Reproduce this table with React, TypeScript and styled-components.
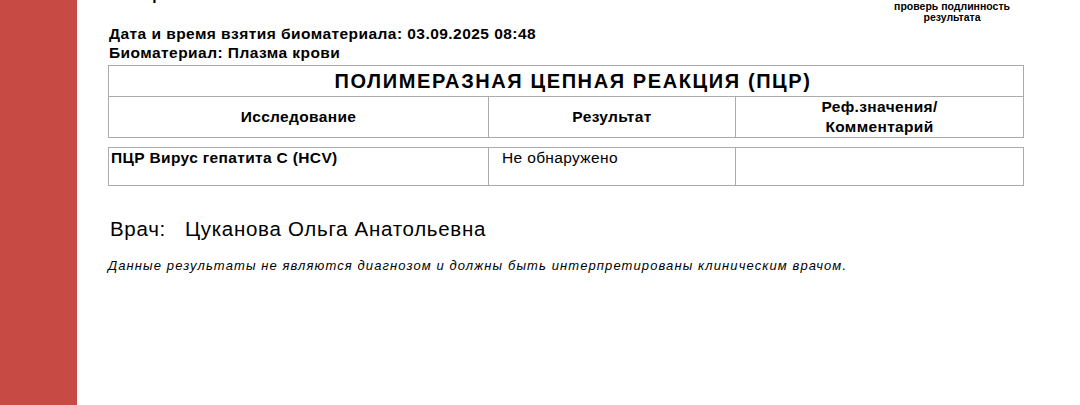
import styled, { createGlobalStyle } from 'styled-components';

const GlobalStyle = createGlobalStyle`
  html, body { margin: 0; padding: 0; background: #fff; }
  body { font-family: 'Liberation Sans', Arial, sans-serif; color: #000; }
`;

const Page = styled.div`
  display: flex;
  width: 1080px;
  height: 405px;
  overflow: hidden;
  background: #fff;
`;

const SideBar = styled.aside`
  flex: 0 0 77px;
  background: #c84a45;
`;

const Sheet = styled.main`
  flex: 1;
  padding: 0 0 0 31px;
`;

const TopRow = styled.div`
  display: flex;
  justify-content: space-between;
  align-items: flex-start;
  height: 24px;
`;

const CutLine = styled.div`
  margin: -14px 0 0 2px;
  font-size: 15.5px;
  font-weight: 700;
  letter-spacing: 0.4px;
`;

const CheckNote = styled.div`
  margin: 1px 70px 0 0;
  font-size: 10.5px;
  font-weight: 700;
  line-height: 11px;
  text-align: center;
`;

const InfoLine = styled.div`
  padding-left: 1px;
  font-size: 15.5px;
  font-weight: 700;
  letter-spacing: 0.45px;
  line-height: 19px;
`;

const Grid = styled.table<{ $top: number }>`
  width: 915px;
  border-collapse: collapse;
  table-layout: fixed;
  margin-top: ${({ $top }) => $top}px;
`;

const Cell = styled.td<{ $h: number; $align?: string; $bold?: boolean; $pad?: number }>`
  border: 1px solid #ababab;
  height: ${({ $h }) => $h}px;
  padding: 0 ${({ $pad }) => $pad ?? 2}px;
  text-align: ${({ $align }) => $align ?? 'center'};
  font-size: 15.5px;
  letter-spacing: 0.35px;
  font-weight: ${({ $bold }) => ($bold ? 700 : 400)};
  line-height: 20px;
`;

const TitleCell = styled(Cell)`
  padding-left: 16px;
  font-size: 20px;
  letter-spacing: 1.6px;
  line-height: 22px;
`;

const DataCell = styled(Cell)`
  vertical-align: top;
  padding-top: 0;
`;

const Doctor = styled.div`
  margin-top: 31px;
  padding-left: 2px;
  font-size: 20.5px;
  letter-spacing: 0.7px;
  line-height: 24px;
  display: flex;
  gap: 19px;
`;

const Disclaimer = styled.div`
  margin-top: 17px;
  font-size: 13px;
  font-style: italic;
  letter-spacing: 1.1px;
  line-height: 16px;
`;

const cols = [380, 247, 288];

function Cols() {
  return (
    <colgroup>
      {cols.map((w) => (
        <col key={w} style={{ width: w }} />
      ))}
    </colgroup>
  );
}

export default function App() {
  return (
    <Page>
      <GlobalStyle />
      <SideBar />
      <Sheet>
        <TopRow>
          <CutLine>Номер заказа: 2509030848</CutLine>
          <CheckNote>
            проверь подлинность
            <br />
            результата
          </CheckNote>
        </TopRow>
        <InfoLine>Дата и время взятия биоматериала: 03.09.2025 08:48</InfoLine>
        <InfoLine>Биоматериал: Плазма крови</InfoLine>
        <Grid $top={3}>
          <Cols />
          <tbody>
            <tr>
              <TitleCell $h={30} $bold colSpan={3}>
                ПОЛИМЕРАЗНАЯ ЦЕПНАЯ РЕАКЦИЯ (ПЦР)
              </TitleCell>
            </tr>
            <tr>
              <Cell $h={40} $bold>Исследование</Cell>
              <Cell $h={40} $bold>Результат</Cell>
              <Cell $h={40} $bold>
                Реф.значения/
                <br />
                Комментарий
              </Cell>
            </tr>
          </tbody>
        </Grid>
        <Grid $top={9}>
          <Cols />
          <tbody>
            <tr>
              <DataCell $h={37} $bold $align="left" $pad={2}>
                ПЦР Вирус гепатита С (HCV)
              </DataCell>
              <DataCell $h={37} $align="left" $pad={13}>
                Не обнаружено
              </DataCell>
              <DataCell $h={37} />
            </tr>
          </tbody>
        </Grid>
        <Doctor>
          <span>Врач:</span>
          <span>Цуканова Ольга Анатольевна</span>
        </Doctor>
        <Disclaimer>
          Данные результаты не являются диагнозом и должны быть интерпретированы клиническим врачом.
        </Disclaimer>
      </Sheet>
    </Page>
  );
}
